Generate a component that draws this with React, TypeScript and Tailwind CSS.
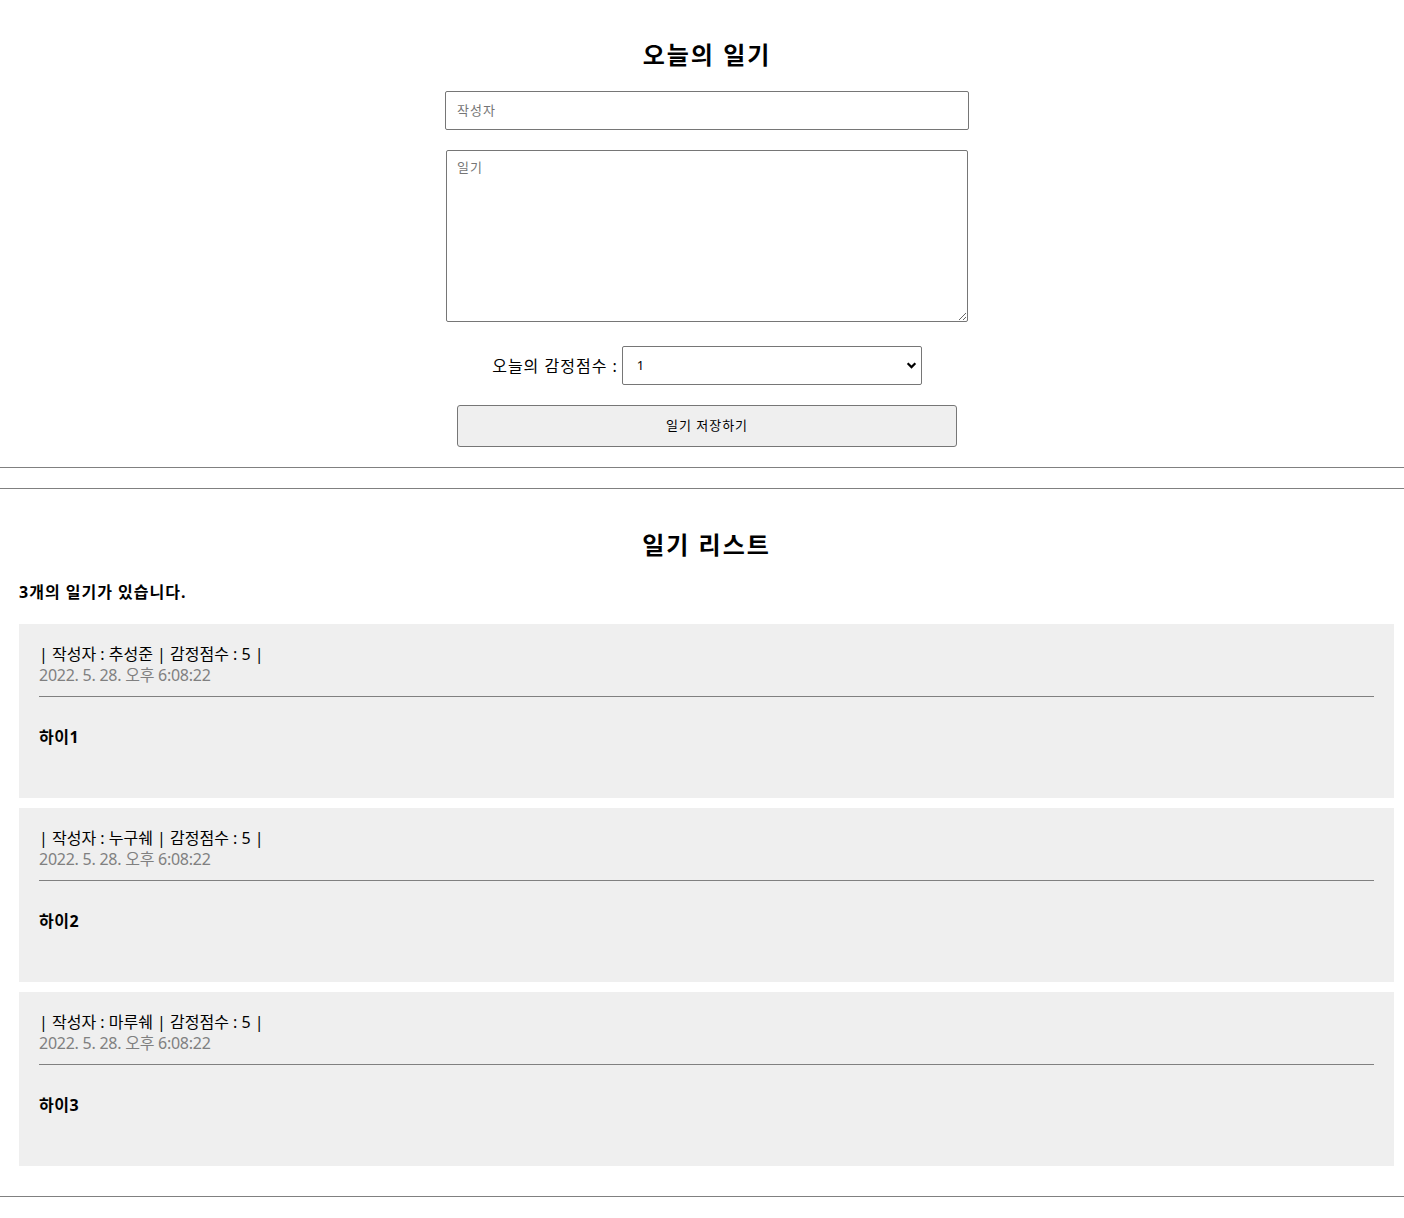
import React, { useState } from 'react';

interface Diary {
  id: number;
  author: string;
  content: string;
  emotion: number;
  created: string;
}

const dummyList: Diary[] = [
  { id: 1, author: '추성준', content: '하이1', emotion: 5, created: '2022. 5. 28. 오후 6:08:22' },
  { id: 2, author: '누구쉐', content: '하이2', emotion: 5, created: '2022. 5. 28. 오후 6:08:22' },
  { id: 3, author: '마루쉐', content: '하이3', emotion: 5, created: '2022. 5. 28. 오후 6:08:22' },
];

const FONT = "font-['Noto_Sans','Noto_Sans_CJK_KR',sans-serif]";

const DiaryEditor = () => {
  const [author, setAuthor] = useState('');
  const [content, setContent] = useState('');
  const [emotion, setEmotion] = useState('1');

  return (
    <div className="pl-[10px] pt-[39px] pb-[20px] text-center border-b border-[#808080]">
      <h2 className="text-[24px] leading-[32px] font-bold text-black tracking-[2px]">오늘의 일기</h2>
      <div className="mt-[20px]">
        <input
          value={author}
          onChange={(e) => setAuthor(e.target.value)}
          placeholder="작성자"
          className="block mx-auto w-[524px] h-[39px] px-[11px] pb-[2px] border border-[#767676] rounded-[2px] text-[13px] tracking-[1px] placeholder:text-[#757575] outline-none"
        />
      </div>
      <div className="mt-[20px]">
        <textarea
          value={content}
          onChange={(e) => setContent(e.target.value)}
          placeholder="일기"
          className="block mx-auto w-[522px] h-[172px] px-[10px] py-[7px] border border-[#767676] rounded-[2px] text-[13px] tracking-[1px] placeholder:text-[#757575] outline-none resize-y"
        />
      </div>
      <div className="mt-[24px] flex justify-center items-center gap-[4px]">
        <span className="text-[16px] tracking-[1px] text-black">오늘의 감정점수 :</span>
        <div className="relative w-[300px] h-[39px]">
          <select
            value={emotion}
            onChange={(e) => setEmotion(e.target.value)}
            className="appearance-none w-full h-full pl-[14px] pr-[30px] border border-[#767676] rounded-[2px] bg-white text-[13px] text-black outline-none"
          >
            {[1, 2, 3, 4, 5].map((n) => (
              <option key={n} value={n}>{n}</option>
            ))}
          </select>
          <svg
            className="absolute right-[5px] top-[14px] pointer-events-none"
            width="11"
            height="11"
            viewBox="0 0 10 10"
          >
            <path d="M1.5 3 L5 6.5 L8.5 3" fill="none" stroke="#000" strokeWidth="2" />
          </svg>
        </div>
      </div>
      <div className="mt-[20px]">
        <button className="block mx-auto w-[500px] h-[42px] border border-[#767676] rounded-[3px] bg-[#efefef] text-[13px] tracking-[1px] text-black">
          일기 저장하기
        </button>
      </div>
    </div>
  );
};

const DiaryItem = ({ author, content, emotion, created }: Diary) => (
  <div className="mb-[10px] bg-[#efefef] p-[20px]">
    <div className="text-[16px] leading-[21px] text-black">
      | 작성자 : {author} | 감정점수 : {emotion} |
    </div>
    <div className="text-[16px] leading-[21px] tracking-[-0.25px] text-[#808080]">{created}</div>
    <div className="mt-[10px] border-t border-[#808080]" />
    <div className="my-[30px] text-[16px] leading-[21px] font-bold tracking-[0.5px] text-black">{content}</div>
  </div>
);

const DiaryList = ({ list }: { list: Diary[] }) => (
  <div className="mt-[20px] border-y border-[#808080] pl-[19px] pr-[10px] pt-[20px] pb-[20px]">
    <h2 className="mt-[20px] text-center text-[24px] leading-[32px] font-bold tracking-[2px] text-black">일기 리스트</h2>
    <h4 className="mt-[21px] text-[16px] leading-[21px] font-bold tracking-[1px] text-black">{list.length}개의 일기가 있습니다.</h4>
    <div className="mt-[21px]">
      {list.map((it) => (
        <DiaryItem key={it.id} {...it} />
      ))}
    </div>
  </div>
);

export default function App() {
  return (
    <div className={`${FONT} bg-white min-h-[1218px]`}>
      <DiaryEditor />
      <DiaryList list={dummyList} />
    </div>
  );
}
